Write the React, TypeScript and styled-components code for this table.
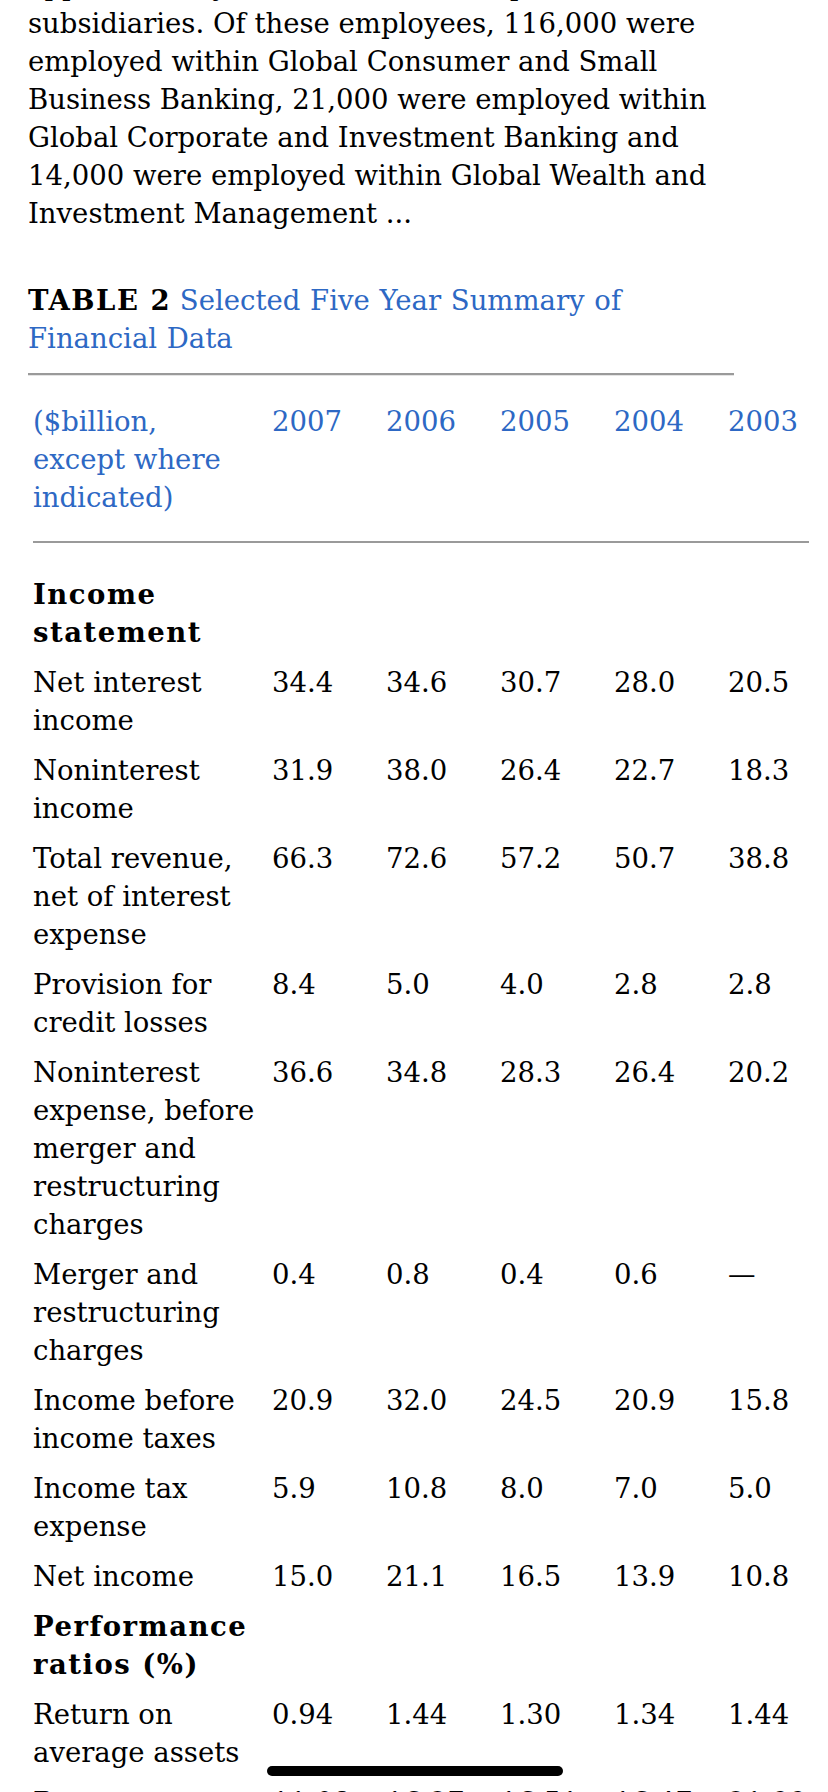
import React from "react";
import styled, { createGlobalStyle } from "styled-components";

const GlobalStyle = createGlobalStyle`
  html, body {
    margin: 0;
    padding: 0;
    background: #fff;
  }
  body {
    font-family: "DejaVu Serif", "Liberation Serif", serif;
    color: #000;
    overflow: hidden;
  }
`;

const BLUE = "#2d68c4";

const Page = styled.div`
  padding: 0 28px;
  font-size: 27.5px;
  line-height: 38px;
`;

const Article = styled.p`
  margin: -34.5px 0 0;
  width: 706px;
  white-space: nowrap;
`;

const Caption = styled.div`
  margin-top: 49px;
  width: 706px;
  padding-bottom: 16.5px;
  border-bottom: 2px solid #9a9a9a;
  box-shadow: 0 1px 0 #e4e4e4;
  white-space: nowrap;
`;

const CaptionLabel = styled.span`
  font-weight: 700;
  letter-spacing: 1.5px;
`;

const CaptionTitle = styled.span`
  color: ${BLUE};
  word-spacing: 1px;
`;

const Table = styled.table`
  margin-left: 5px;
  width: 776px;
  table-layout: fixed;
  border-collapse: collapse;
  font-size: 27.5px;
  line-height: 38px;
`;

const HeadCell = styled.th<{ $w: number }>`
  width: ${(p) => p.$w}px;
  padding: 26.5px 0 25.5px;
  text-align: left;
  vertical-align: top;
  font-weight: 400;
  color: ${BLUE};
  white-space: nowrap;
  border-bottom: 2px solid #9a9a9a;
  box-shadow: 0 1px 0 #e4e4e4;
`;

const Row = styled.tr`
  &:first-child td {
    padding-top: 31.5px;
  }
`;

const Cell = styled.td<{ $bold?: boolean }>`
  padding: 6px 0;
  text-align: left;
  vertical-align: top;
  white-space: nowrap;
  font-weight: ${(p) => (p.$bold ? 700 : 400)};
  letter-spacing: ${(p) => (p.$bold ? "1.5px" : "normal")};
`;

const HomeIndicator = styled.div`
  position: fixed;
  left: 50%;
  bottom: 16px;
  width: 296px;
  height: 10px;
  margin-left: 1px;
  transform: translateX(-50%);
  border-radius: 5px;
  background: #000;
`;

type Line = { label: string[]; values?: string[]; section?: boolean };

const years = ["2007", "2006", "2005", "2004", "2003"];
const widths = [239, 114, 114, 114, 114, 81];

const rows: Line[] = [
  { label: ["Income", "statement"], section: true },
  { label: ["Net interest", "income"], values: ["34.4", "34.6", "30.7", "28.0", "20.5"] },
  { label: ["Noninterest", "income"], values: ["31.9", "38.0", "26.4", "22.7", "18.3"] },
  { label: ["Total revenue,", "net of interest", "expense"], values: ["66.3", "72.6", "57.2", "50.7", "38.8"] },
  { label: ["Provision for", "credit losses"], values: ["8.4", "5.0", "4.0", "2.8", "2.8"] },
  {
    label: ["Noninterest", "expense, before", "merger and", "restructuring", "charges"],
    values: ["36.6", "34.8", "28.3", "26.4", "20.2"],
  },
  { label: ["Merger and", "restructuring", "charges"], values: ["0.4", "0.8", "0.4", "0.6", "—"] },
  { label: ["Income before", "income taxes"], values: ["20.9", "32.0", "24.5", "20.9", "15.8"] },
  { label: ["Income tax", "expense"], values: ["5.9", "10.8", "8.0", "7.0", "5.0"] },
  { label: ["Net income"], values: ["15.0", "21.1", "16.5", "13.9", "10.8"] },
  { label: ["Performance", "ratios (%)"], section: true },
  { label: ["Return on", "average assets"], values: ["0.94", "1.44", "1.30", "1.34", "1.44"] },
  {
    label: ["Return on", "average common", "shareholders’", "equity"],
    values: ["11.08", "16.27", "16.51", "16.47", "21.99"],
  },
];

const paragraph = [
  "approximately 210,000 full-time equivalent",
  "subsidiaries. Of these employees, 116,000 were",
  "employed within Global Consumer and Small",
  "Business Banking, 21,000 were employed within",
  "Global Corporate and Investment Banking and",
  "14,000 were employed within Global Wealth and",
  "Investment Management ...",
];

function Lines({ lines }: { lines: string[] }) {
  return (
    <>
      {lines.map((l, i) => (
        <React.Fragment key={i}>
          {i > 0 && <br />}
          {l}
        </React.Fragment>
      ))}
    </>
  );
}

export default function App() {
  return (
    <>
      <GlobalStyle />
      <Page>
        <Article>
          <Lines lines={paragraph} />
        </Article>

        <Caption>
          <CaptionLabel>TABLE 2</CaptionLabel>{" "}
          <CaptionTitle>
            Selected Five Year Summary of
            <br />
            Financial Data
          </CaptionTitle>
        </Caption>

        <Table>
          <thead>
            <tr>
              <HeadCell $w={widths[0]}>
                <Lines lines={["($billion,", "except where", "indicated)"]} />
              </HeadCell>
              {years.map((y, i) => (
                <HeadCell key={y} $w={widths[i + 1]}>
                  {y}
                </HeadCell>
              ))}
            </tr>
          </thead>
          <tbody>
            {rows.map((r, i) => (
              <Row key={i}>
                <Cell $bold={r.section}>
                  <Lines lines={r.label} />
                </Cell>
                {(r.values ?? ["", "", "", "", ""]).map((v, j) => (
                  <Cell key={j}>{v}</Cell>
                ))}
              </Row>
            ))}
          </tbody>
        </Table>
      </Page>
      <HomeIndicator />
    </>
  );
}
